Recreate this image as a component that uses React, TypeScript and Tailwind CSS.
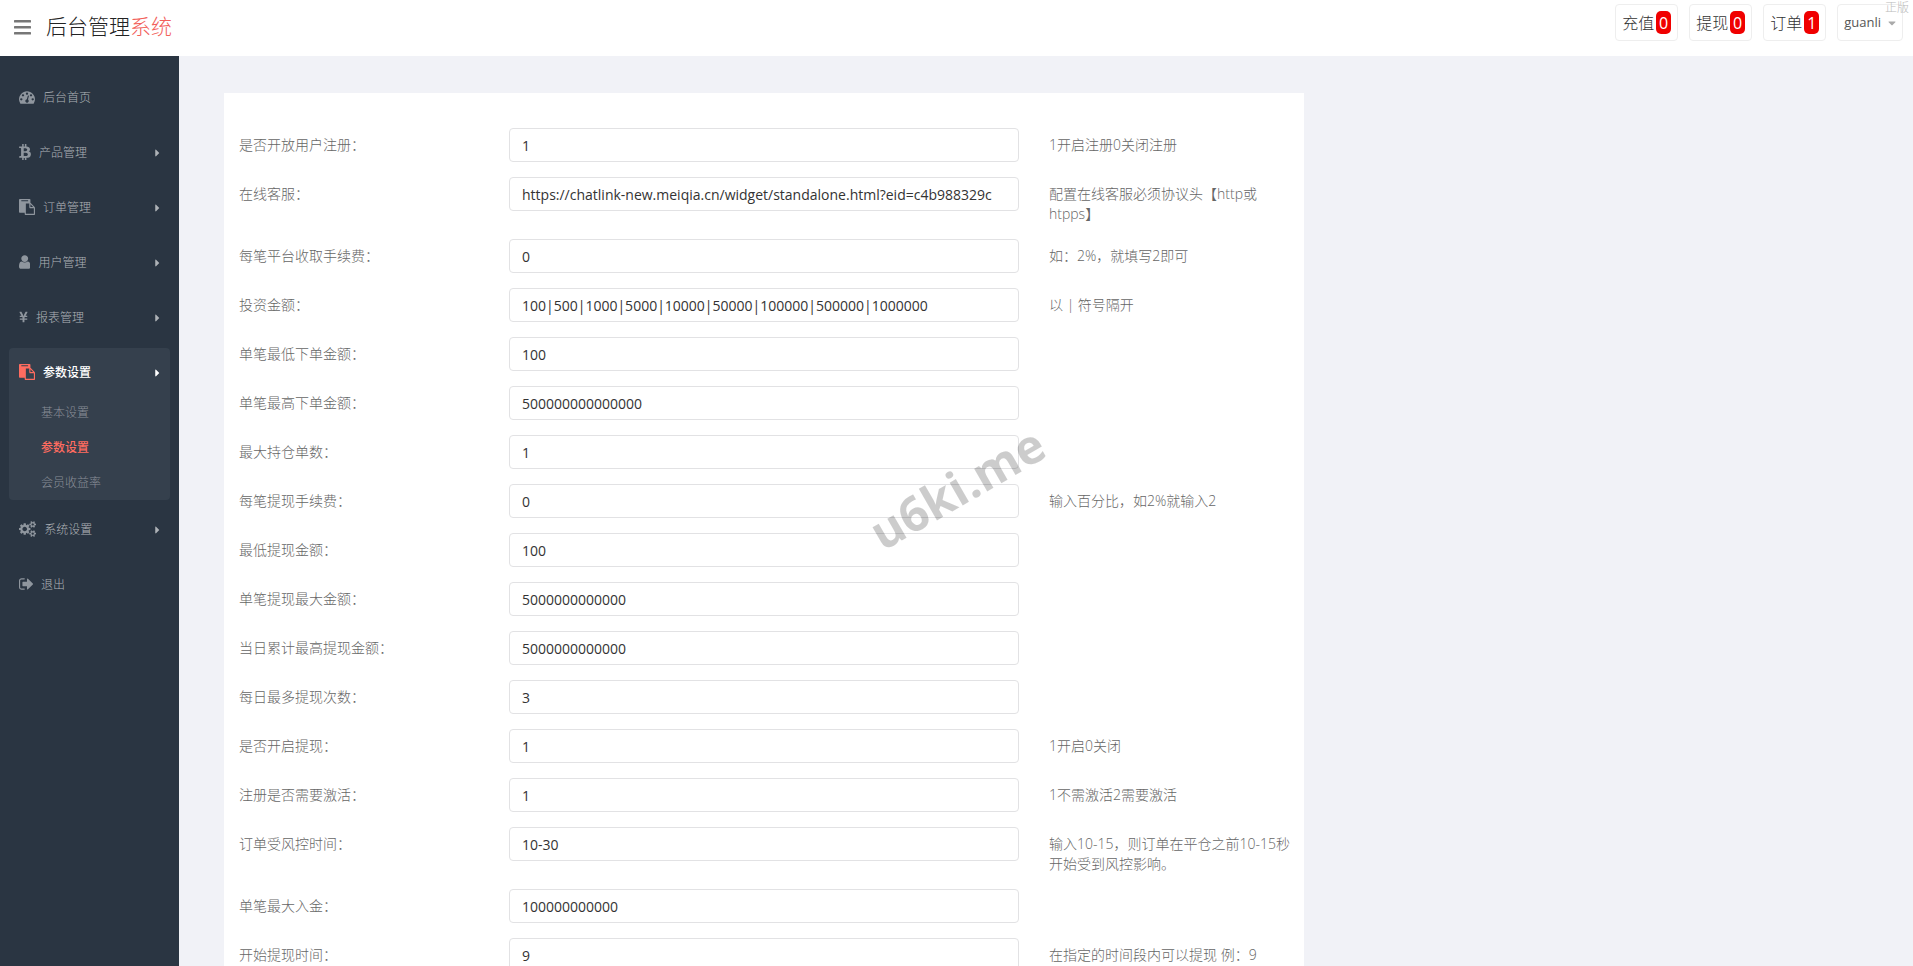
import type { ReactNode } from "react";
import { FaBtc, FaCaretDown, FaCaretRight, FaYenSign } from "react-icons/fa";

function Glyph({ viewBox, d }: { viewBox: string; d: string }) {
  return (
    <svg viewBox={viewBox} className="h-4 w-auto" fill="currentColor" aria-hidden="true">
      <path d={d} />
    </svg>
  );
}

const paste = (
  <Glyph
    viewBox="0 0 1792 1792"
    d="M768 1664h896v-640h-416q-40 0-68-28t-28-68v-416h-384v1152zm256-1440v-64q0-13-9.5-22.5t-22.5-9.5h-704q-13 0-22.5 9.5t-9.5 22.5v64q0 13 9.5 22.5t22.5 9.5h704q13 0 22.5-9.5t9.5-22.5zm256 672h299l-299-299v299zm512 128v672q0 40-28 68t-68 28h-960q-40 0-68-28t-28-68v-160h-544q-40 0-68-28t-28-68v-1344q0-40 28-68t68-28h1088q40 0 68 28t28 68v328q21 13 36 28l408 408q28 28 48 76t20 88z"
  />
);

const dashboard = (
  <Glyph
    viewBox="0 0 1792 1792"
    d="M384 1152q0-53-37.5-90.5t-90.5-37.5-90.5 37.5-37.5 90.5 37.5 90.5 90.5 37.5 90.5-37.5 37.5-90.5zm192-448q0-53-37.5-90.5t-90.5-37.5-90.5 37.5-37.5 90.5 37.5 90.5 90.5 37.5 90.5-37.5 37.5-90.5zm428 481l101-382q6-26-7.5-48.5t-38.5-29.5-48 6.5-30 39.5l-101 382q-60 5-107 43.5t-63 98.5q-20 77 20 146t117 89 146-20 89-117q16-60-6-117t-72-91zm660-33q0-53-37.5-90.5t-90.5-37.5-90.5 37.5-37.5 90.5 37.5 90.5 90.5 37.5 90.5-37.5 37.5-90.5zm-640-640q0-53-37.5-90.5t-90.5-37.5-90.5 37.5-37.5 90.5 37.5 90.5 90.5 37.5 90.5-37.5 37.5-90.5zm448 192q0-53-37.5-90.5t-90.5-37.5-90.5 37.5-37.5 90.5 37.5 90.5 90.5 37.5 90.5-37.5 37.5-90.5zm320 448q0 261-141 483-19 29-54 29h-1402q-35 0-54-29-141-221-141-483 0-182 71-348t191-286 286-191 348-71 348 71 286 191 191 286 71 348z"
  />
);

const user = (
  <Glyph
    viewBox="256 0 1280 1792"
    d="M1536 1399q0 109-62.5 187t-150.5 78h-854q-88 0-150.5-78t-62.5-187q0-85 8.5-160.5t31.5-152 58.5-131 94-89 134.5-34.5q131 128 313 128t313-128q76 0 134.5 34.5t94 89 58.5 131 31.5 152 8.5 160.5zm-256-887q0 159-112.5 271.5t-271.5 112.5-271.5-112.5-112.5-271.5 112.5-271.5 271.5-112.5 271.5 112.5 112.5 271.5z"
  />
);

const cogs = (
  <Glyph
    viewBox="0 0 1920 1792"
    d="M896 896q0-106-75-181t-181-75-181 75-75 181 75 181 181 75 181-75 75-181zm768 512q0-52-38-90t-90-38-90 38-38 90q0 53 37.5 90.5t90.5 37.5 90.5-37.5 37.5-90.5zm0-1024q0-52-38-90t-90-38-90 38-38 90q0 53 37.5 90.5t90.5 37.5 90.5-37.5 37.5-90.5zm-384 421v185q0 10-7 19.5t-16 10.5l-155 24q-11 35-32 76 34 48 90 115 7 11 7 20 0 12-7 19-23 30-82.5 89.5t-78.5 59.5q-11 0-21-7l-115-90q-37 19-77 31-11 108-23 155-7 24-30 24h-186q-11 0-20-7.5t-10-17.5l-23-153q-34-10-75-31l-118 89q-7 7-20 7-11 0-21-8-144-133-144-160 0-9 7-19 10-14 41-53t47-61q-23-44-35-82l-152-24q-10-1-17-9.5t-7-19.5v-185q0-10 7-19.5t16-10.5l155-24q11-35 32-76-34-48-90-115-7-11-7-20 0-12 7-20 22-30 82-89t79-59q11 0 21 7l115 90q34-18 77-32 11-108 23-154 7-24 30-24h186q11 0 20 7.5t10 17.5l23 153q34 10 75 31l118-89q8-7 20-7 11 0 21 8 144 133 144 160 0 8-7 19-12 16-42 54t-45 60q23 48 34 82l152 23q10 2 17 10.5t7 19.5zm640 533v140q0 16-149 31-12 27-30 52 51 113 51 138 0 4-4 7-122 71-124 71-8 0-46-47t-52-68q-20 2-30 2t-30-2q-14 21-52 68t-46 47q-2 0-124-71-4-3-4-7 0-25 51-138-18-25-30-52-149-15-149-31v-140q0-16 149-31 13-29 30-52-51-113-51-138 0-4 4-7 4-2 35-20t59-34 30-16q8 0 46 46.5t52 67.5q20-2 30-2t30 2q51-71 92-112l6-2q4 0 124 70 4 3 4 7 0 25-51 138 17 23 30 52 149 15 149 31zm0-1024v140q0 16-149 31-12 27-30 52 51 113 51 138 0 4-4 7-122 71-124 71-8 0-46-47t-52-68q-20 2-30 2t-30-2q-14 21-52 68t-46 47q-2 0-124-71-4-3-4-7 0-25 51-138-18-25-30-52-149-15-149-31v-140q0-16 149-31 13-29 30-52-51-113-51-138 0-4 4-7 4-2 35-20t59-34 30-16q8 0 46 46.5t52 67.5q20-2 30-2t30 2q51-71 92-112l6-2q4 0 124 70 4 3 4 7 0 25-51 138 17 23 30 52 149 15 149 31z"
  />
);

const signOut = (
  <Glyph
    viewBox="64 0 1568 1792"
    d="M704 1440q0 4 1 20t.5 26.5-3 23.5-10 19.5-20.5 6.5h-320q-119 0-203.5-84.5t-84.5-203.5v-704q0-119 84.5-203.5t203.5-84.5h320q13 0 22.5 9.5t9.5 22.5q0 4 1 20t.5 26.5-3 23.5-10 19.5-20.5 6.5h-320q-66 0-113 47t-47 113v704q0 66 47 113t113 47h312l11.5 1 11.5 3 8 5.5 7 9 2 13.5zm928-544q0 26-19 45l-544 544q-19 19-45 19t-45-19-19-45v-288h-448q-26 0-45-19t-19-45v-384q0-26 19-45t45-19h448v-288q0-26 19-45t45-19 45 19l544 544q19 19 19 45z"
  />
);

type MenuItem = { label: string; icon: ReactNode; arrow?: boolean; children?: string[] };

const menu: MenuItem[] = [
  { label: "后台首页", icon: dashboard },
  { label: "产品管理", icon: <FaBtc className="h-4 w-3" />, arrow: true },
  { label: "订单管理", icon: paste, arrow: true },
  { label: "用户管理", icon: user, arrow: true },
  { label: "报表管理", icon: <FaYenSign className="h-[14px] w-[9px]" />, arrow: true },
  { label: "参数设置", icon: paste, arrow: true, children: ["基本设置", "参数设置", "会员收益率"] },
  { label: "系统设置", icon: cogs, arrow: true },
  { label: "退出", icon: signOut },
];

const notices = [
  { label: "充值", count: 0 },
  { label: "提现", count: 0 },
  { label: "订单", count: 1 },
];

const fields = [
  { label: "是否开放用户注册：", value: "1", hint: "1开启注册0关闭注册" },
  {
    label: "在线客服：",
    value: "https://chatlink-new.meiqia.cn/widget/standalone.html?eid=c4b988329c",
    hint: "配置在线客服必须协议头【http或htpps】",
  },
  { label: "每笔平台收取手续费：", value: "0", hint: "如：2%，就填写2即可" },
  { label: "投资金额：", value: "100|500|1000|5000|10000|50000|100000|500000|1000000", hint: "以 | 符号隔开" },
  { label: "单笔最低下单金额：", value: "100" },
  { label: "单笔最高下单金额：", value: "500000000000000" },
  { label: "最大持仓单数：", value: "1" },
  { label: "每笔提现手续费：", value: "0", hint: "输入百分比，如2%就输入2" },
  { label: "最低提现金额：", value: "100" },
  { label: "单笔提现最大金额：", value: "5000000000000" },
  { label: "当日累计最高提现金额：", value: "5000000000000" },
  { label: "每日最多提现次数：", value: "3" },
  { label: "是否开启提现：", value: "1", hint: "1开启0关闭" },
  { label: "注册是否需要激活：", value: "1", hint: "1不需激活2需要激活" },
  { label: "订单受风控时间：", value: "10-30", hint: "输入10-15，则订单在平仓之前10-15秒开始受到风控影响。" },
  { label: "单笔最大入金：", value: "100000000000" },
  { label: "开始提现时间：", value: "9", hint: "在指定的时间段内可以提现 例：9" },
];

function Header() {
  return (
    <header className="flex h-14 shrink-0 items-start justify-between bg-white pr-[10px] pl-[14px]">
      <div className="flex h-[54px] items-center gap-[15px]">
        <button type="button" aria-label="菜单" className="text-[#777]">
          <svg viewBox="0 0 17 15" className="h-[15px] w-[17px]" fill="currentColor" aria-hidden="true">
            <rect width="17" height="2.6" rx="0.6" />
            <rect y="6" width="17" height="2.6" rx="0.6" />
            <rect y="12" width="17" height="2.6" rx="0.6" />
          </svg>
        </button>
        <a href="#" className="text-[21px] font-light text-[#222]">
          后台管理<span className="text-[#f2605a]">系统</span>
        </a>
      </div>
      <div className="flex gap-[11px] pt-1">
        {notices.map((n) => (
          <a
            key={n.label}
            href="#"
            className="flex h-[37px] items-center gap-[2px] rounded border border-[#eee] px-[6px] text-base font-light text-[#333]"
          >
            {n.label}
            <span className="flex h-[23px] w-[15px] items-center justify-center rounded-[5px] bg-[#f00000] font-normal text-white">
              {n.count}
            </span>
          </a>
        ))}
        <button
          type="button"
          className="flex h-[37px] items-center gap-[7px] rounded border border-[#eee] px-[6px] text-[13px] text-[#555]"
        >
          guanli
          <FaCaretDown className="h-3 w-2 text-[#aaa]" />
        </button>
      </div>
    </header>
  );
}

function Sidebar() {
  return (
    <aside className="w-[179px] shrink-0 bg-[#2a3542] px-[9px] pt-[17px]">
      <ul className="flex flex-col gap-[5px] text-xs font-light text-[#aeb2b7]">
        {menu.map((item) => (
          <li key={item.label} className={item.children ? "rounded bg-[#35404d]" : ""}>
            <a
              href="#"
              className={`flex h-[50px] items-center gap-2 px-[10px] ${item.children ? "font-medium text-white" : ""}`}
            >
              <span className={`pb-[2px] ${item.children ? "text-[#ff6c60]" : "text-[#8f969e]"}`}>{item.icon}</span>
              {item.label}
              {item.arrow && <FaCaretRight className="ml-auto h-3 w-[5px]" />}
            </a>
            {item.children && (
              <ul className="flex flex-col gap-[5px] pb-[2px] pl-8">
                {item.children.map((child) => (
                  <li key={child}>
                    <a
                      href="#"
                      className={`flex h-[30px] items-center ${child === item.label ? "font-medium text-[#ff6c60]" : "text-[#8a8f98]"}`}
                    >
                      {child}
                    </a>
                  </li>
                ))}
              </ul>
            )}
          </li>
        ))}
      </ul>
    </aside>
  );
}

export default function App() {
  return (
    <div className="relative flex h-screen flex-col overflow-hidden bg-[#f1f2f7] font-['Open_Sans','Noto_Sans_CJK_SC',sans-serif]">
      <Header />
      <div className="flex min-h-0 flex-1">
        <Sidebar />
        <main className="min-w-0 flex-1 overflow-y-auto px-[45px] pt-[37px] [scrollbar-width:none]">
          <form className="flex max-w-[1080px] flex-col gap-[15px] bg-white py-[35px] text-sm">
            {fields.map((f, i) => (
              <div key={f.label} className="grid grid-cols-4">
                <label htmlFor={`field-${i}`} className="px-[15px] pt-[7px] font-light text-[#666]">
                  {f.label}
                </label>
                <div className="col-span-2 px-[15px]">
                  <input
                    id={`field-${i}`}
                    type="text"
                    defaultValue={f.value}
                    className="h-[34px] w-full rounded border border-[#e2e2e4] px-3 text-[#333]"
                  />
                </div>
                {f.hint && <p className="pt-[7px] pr-2 pl-[15px] font-light text-[#666]">{f.hint}</p>}
              </div>
            ))}
          </form>
        </main>
      </div>
      <span className="pointer-events-none absolute top-0 right-1 text-xs leading-4 font-light text-[#bbb]">正版</span>
      <span className="pointer-events-none absolute top-[50.5%] left-1/2 -translate-x-1/2 -translate-y-1/2 -rotate-30 text-5xl font-bold text-black/20">
        u6ki.me
      </span>
    </div>
  );
}
